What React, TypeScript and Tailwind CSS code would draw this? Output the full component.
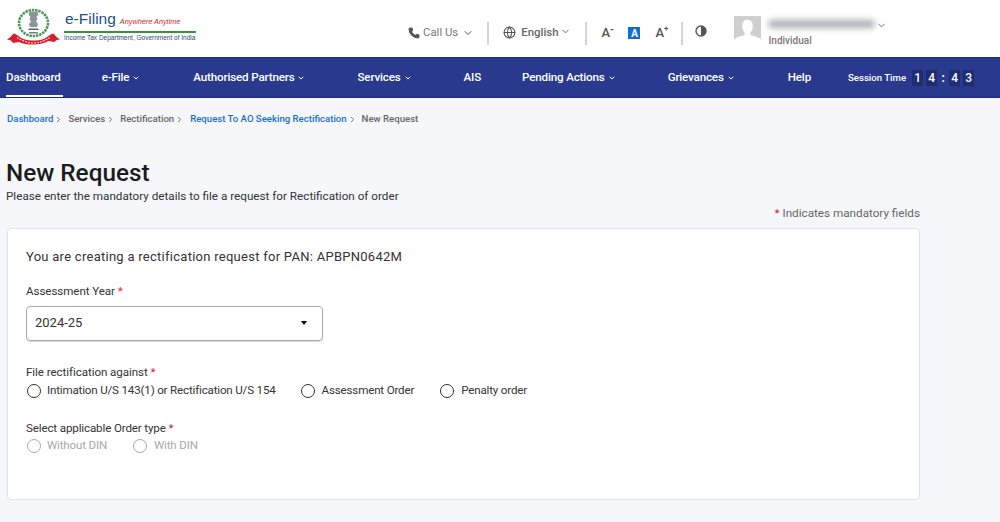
import { ChevronDown, ChevronRight, Phone, Globe } from 'lucide-react';

const navItems = [
  { label: 'e-File', caret: true, cls: 'ml-[39px]' },
  { label: 'Authorised Partners', caret: true, cls: 'ml-[53px]' },
  { label: 'Services', caret: true, cls: 'ml-[52px]' },
  { label: 'AIS', caret: false, cls: 'ml-[52px]' },
  { label: 'Pending Actions', caret: true, cls: 'ml-[41px]' },
  { label: 'Grievances', caret: true, cls: 'ml-[52px]' },
  { label: 'Help', caret: false, cls: 'ml-[53px]' },
];

function Emblem() {
  return (
    <svg width="53" height="38" viewBox="0 0 53 38" className="shrink-0">
      <ellipse cx="26.500" cy="15" rx="14.500" ry="13" fill="none" stroke="#4c9a55" strokeWidth="2.600" strokeDasharray="2.500 0.800" />
      <path d="M22.500 3.500h8l1 3-2 2.500 1 2-1.500 2.500 2 2.500-1 3h-7l-1-3 2-2.500-1.500-2.500 1-2-2-2.500z" fill="#8b949a" />
      <path d="M22 20.500h9l1 1.500H21z" fill="#5c6468" />
      <path d="M22 24h9v1.500h-9z" fill="#777f84" />
      <path d="M0 31.500 3.500 29l3-3.500c5 1.500 6 4 10 5.500 3 1 7 1.500 10 1.500s7-.5 10-1.500c4-1.500 5-4 10-5.500l3 3.500 3.500 2.500-3.500.5-2 2-6-1c-4 2-9 3.500-15 3.500S16 36 12 34l-6 1-2-2.500z" fill="#d3222e" />
      <path d="M10 29.500c4 2.500 10 5.500 16.500 5.500s12.500-3 16.500-5.500" fill="none" stroke="#f6c9cc" strokeWidth="1.200" strokeDasharray="2 1" />
    </svg>
  );
}

function Radio({ label, disabled, cls = 'gap-[6px]' }: { label: string; disabled?: boolean; cls?: string }) {
  return (
    <label className={`flex items-center text-[11.600px] tracking-[-0.180px] ${cls} ${disabled ? 'text-[#a9a9a9]' : 'text-[#333]'}`}>
      <span className={`size-[14px] rounded-full border-[1.500px] bg-white ${disabled ? 'border-[#a9a9a9]' : 'border-[#333]'}`} />
      {label}
    </label>
  );
}

function Asterisk() {
  return <span className="text-[#c8202f]"> *</span>;
}

function Crumb() {
  return <ChevronRight size={9} strokeWidth={2.500} className="mr-[5px] ml-[1px]" />;
}

function Digit({ value }: { value: string }) {
  return <span className="flex h-[16px] w-[11px] items-center justify-center bg-[#1f2c72]">{value}</span>;
}

function Divider({ cls }: { cls: string }) {
  return <div className={`h-[23px] w-[2px] bg-[#d4d4d4] ${cls}`} />;
}

export default function App() {
  return (
    <div className="h-[522px] overflow-hidden bg-[#f5f7fb] font-['Roboto',sans-serif]">
      <header className="flex h-[57px] items-center bg-white">
        <div className="mt-[-3px] ml-[7px] flex items-center">
          <Emblem />
          <div className="mt-[-2px] ml-[4px] w-[132px]">
            <div className="flex items-baseline whitespace-nowrap leading-[18px]">
              <span className="ml-[1px] font-['Liberation_Sans',sans-serif] text-[15.500px] text-[#1e4f8f]">e-Filing</span>
              <span className="ml-[4px] font-['Liberation_Sans',sans-serif] text-[7.300px] text-[#d2232a] italic">Anywhere Anytime</span>
            </div>
            <div className="h-[2px] w-[132px] bg-[#3c8f3f]" />
            <div className="whitespace-nowrap font-['Liberation_Sans',sans-serif] text-[6.500px] leading-[10px] text-[#2a4a6a]">Income Tax Department, Government of India</div>
          </div>
        </div>

        <div className="ml-[212px] flex items-center pt-[9px]">
          <div className="flex items-center text-[11.400px] text-[#777]">
            <Phone size={12} fill="#555" stroke="#555" />
            <span className="ml-[3px]">Call Us</span>
            <ChevronDown size={12} className="ml-[4px] text-[#555]" />
          </div>
          <Divider cls="ml-[13px]" />
          <div className="ml-[14px] flex items-center text-[11.400px] font-medium text-[#666]">
            <Globe size={13} className="text-[#555]" />
            <span className="ml-[5px]">English</span>
            <ChevronDown size={11} className="mt-[-3px] ml-[2px]" />
          </div>
          <Divider cls="ml-[14px]" />
          <div className="ml-[14px] flex w-[16px] items-start text-[13px] font-medium leading-[16px] text-[#555]">A<span className="mt-[-3px] text-[10px] font-bold">-</span></div>
          <div className="ml-[11px] flex size-[12px] items-center justify-center bg-[#0f6fd0] text-[10px] font-bold text-white">A</div>
          <div className="ml-[15px] flex w-[13px] items-start text-[13px] font-medium leading-[16px] text-[#555]">A<span className="mt-[-2px] text-[8px] font-bold leading-[12px]">+</span></div>
          <Divider cls="ml-[13px]" />
          <svg width="12" height="12" viewBox="0 0 12 12" className="mt-[-4px] ml-[12px]">
            <circle cx="6" cy="6" r="5" fill="#fff" stroke="#555" strokeWidth="1.400" />
            <path d="M6 1a5 5 0 0 1 0 10z" fill="#555" />
          </svg>

          <svg width="27" height="27" viewBox="0 0 28 28" className="mt-[-7px] ml-[27px]">
            <rect width="28" height="28" fill="#cfcfcf" />
            <path d="M14 4c3.500 0 5.500 2.500 5.500 6.500 0 2.500-1 5-2.500 6.500v2.500c2 1.500 7 2 11 4.500v4H0V24c4-2.500 9-3 11-4.500V17c-1.500-1.500-2.500-4-2.500-6.500C8.500 6.500 10.500 4 14 4z" fill="#fff" />
          </svg>
          <div className="mt-[-3px] ml-[7px]">
            <div className="flex items-center">
              <div className="h-[8px] w-[107px] rounded-sm bg-[#a9acb2] blur-[3px]" />
              <ChevronDown size={11} className="mt-[4px] ml-[1px] text-[#666]" />
            </div>
            <div className="mt-[4px] text-[10px] font-medium leading-[12px] text-[#777]">Individual</div>
          </div>
        </div>
      </header>

      <nav className="flex h-[41px] items-center bg-[#293a8e] pt-[1px] text-[11.600px] font-medium tracking-[-0.160px] text-white shadow-[inset_0_-1px_0_#1f2c72,inset_0_1px_0_#1f2c72]">
        <div className="mt-[-2px] ml-[6px] flex h-[39px] items-center border-b-2 border-white pt-[4px] pr-[2px]">Dashboard</div>
        {navItems.map((item) => (
          <div key={item.label} className={`flex items-center ${item.cls}`}>
            {item.label}
            {item.caret && <ChevronDown size={8} strokeWidth={3} className="ml-[3px]" />}
          </div>
        ))}
        <div className="ml-[37px] text-[9.600px] tracking-normal">Session Time</div>
        <div className="ml-[6px] flex items-center text-[12px]">
          <Digit value="1" />
          <span className="ml-[3px]"><Digit value="4" /></span>
          <span className="mx-[4px] w-[4px] text-center text-[12px] font-bold leading-[16px]">:</span>
          <Digit value="4" />
          <span className="ml-[3px]"><Digit value="3" /></span>
        </div>
      </nav>

      <main className="pl-[7px]">
        <div className="flex h-[41px] items-center pt-[2px] text-[9.600px] font-medium text-[#666]">
          <span className="text-[#1a6fc4]">Dashboard</span>
          <Crumb />
          <span>Services</span>
          <Crumb />
          <span>Rectification</span>
          <Crumb />
          <span className="ml-[1px] text-[#1a6fc4]">Request To AO Seeking Rectification</span>
          <Crumb />
          <span>New Request</span>
        </div>
        <h1 className="mt-[19px] ml-[-1px] text-[24.300px] font-medium leading-[30px] text-[#1c1c1c]">New Request</h1>
        <p className="mt-[1px] ml-[-1px] text-[11.700px] leading-[14px] text-[#333]">Please enter the mandatory details to file a request for Rectification of order</p>
        <p className="mt-[3px] mr-[80px] text-right text-[11.700px] leading-[14px] text-[#666]">
          <span className="text-[#c8202f]">* </span>Indicates mandatory fields
        </p>

        <section className="mt-[8px] h-[272px] w-[913px] rounded-[4px] border border-[#dfe2e8] bg-white pt-[20px] pl-[18px]">
          <p className="text-[13px] leading-[16px] tracking-[0.270px] text-[#333]">You are creating a rectification request for PAN: APBPN0642M</p>

          <p className="mt-[19px] text-[11.600px] leading-[14px] tracking-[-0.070px] text-[#333]">Assessment Year<Asterisk /></p>
          <div className="mt-[8px] flex h-[35px] w-[297px] items-center justify-between rounded-[4px] border border-[#a8a8a8] pr-[15px] pb-[2px] pl-[8px] shadow-[0_1px_1px_rgba(0,0,0,0.15)]">
            <span className="text-[13px] text-[#333]">2024-25</span>
            <span className="h-0 w-0 border-x-[3px] border-t-[4px] border-x-transparent border-t-black" />
          </div>

          <p className="mt-[24px] text-[11.600px] leading-[14px] tracking-[-0.070px] text-[#333]">File rectification against<Asterisk /></p>
          <div className="mt-[3px] ml-[1px] flex items-center gap-[25px]">
            <Radio label="Intimation U/S 143(1) or Rectification U/S 154" />
            <Radio label="Assessment Order" cls="gap-[7px]" />
            <Radio label="Penalty order" cls="ml-[1px] gap-[7px]" />
          </div>

          <p className="mt-[22px] text-[11.600px] leading-[14px] tracking-[-0.140px] text-[#333]">Select applicable Order type<Asterisk /></p>
          <div className="mt-[2px] ml-[1px] flex items-center gap-[26px]">
            <Radio label="Without DIN" disabled />
            <Radio label="With DIN" disabled cls="gap-[7px]" />
          </div>
        </section>
      </main>
    </div>
  );
}
